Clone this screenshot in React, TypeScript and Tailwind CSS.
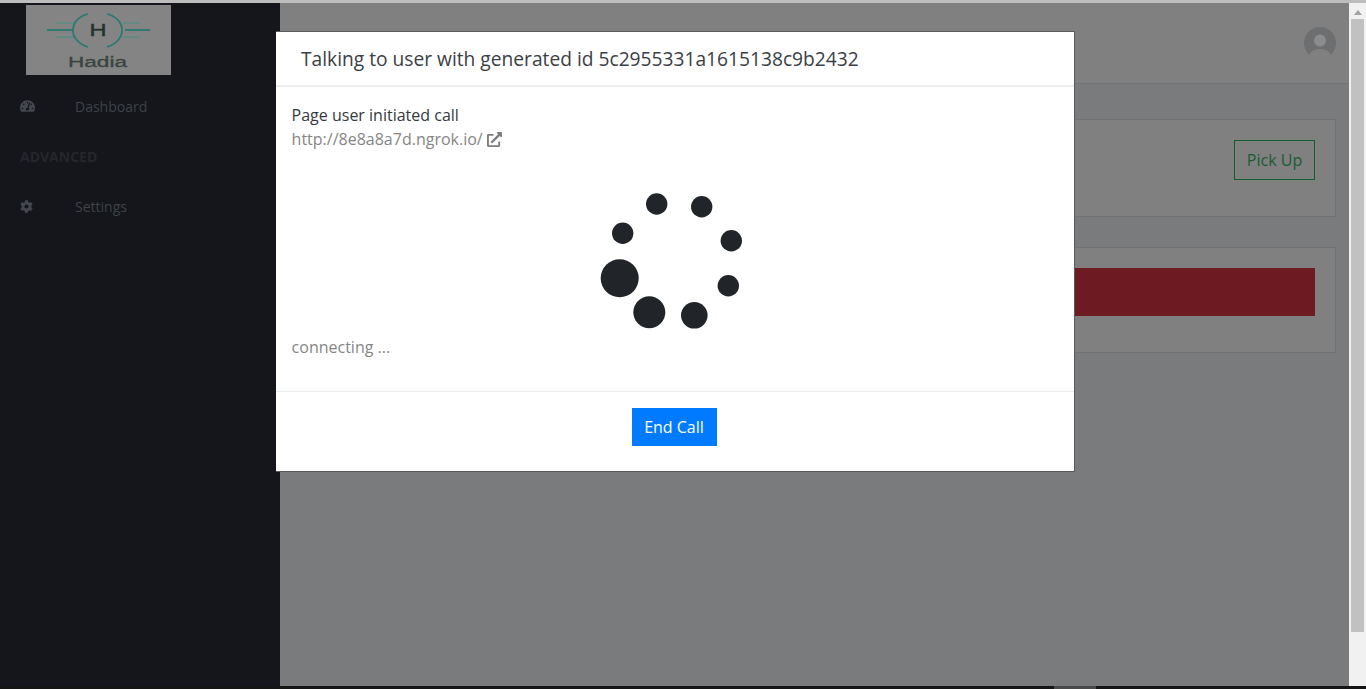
import { FaCog, FaExternalLinkAlt, FaTachometerAlt } from "react-icons/fa";

const SPINNER_DOTS = [
  { cx: 76.7, cy: 24, r: 10.7 },
  { cx: 121.7, cy: 26.7, r: 10.7 },
  { cx: 151.3, cy: 60.7, r: 10.7 },
  { cx: 148.3, cy: 105.7, r: 10.7 },
  { cx: 114.3, cy: 135.3, r: 13.3 },
  { cx: 69.3, cy: 132.3, r: 16 },
  { cx: 39.7, cy: 98.3, r: 19 },
  { cx: 42.7, cy: 53.3, r: 10.7 },
];

function Logo() {
  return (
    <div className="ml-[26px] mt-[2px] h-[70px] w-[145px] bg-[#848484]">
      <svg width="145" height="70" viewBox="0 0 145 70">
        <g fill="none" stroke="#2a7a70" strokeWidth="1.8">
          <path d="M21 25 H47" />
          <path d="M30 18 H48 M30 32 H48" stroke="#5a8a83" strokeWidth="1.4" />
          <path d="M99 25 H124" />
          <path d="M97 18 H114 M97 32 H114" stroke="#5a8a83" strokeWidth="1.4" />
          <path d="M62 9 C42 14 42 36 62 42" />
          <path d="M81 9 C101 14 101 36 81 42" />
        </g>
        <text x="63.5" y="31" textLength="17" lengthAdjust="spacingAndGlyphs" fontFamily="Liberation Sans, sans-serif" fontSize="17" fill="#263230" stroke="#263230" strokeWidth="0.4">
          H
        </text>
        <text x="42" y="62" textLength="59" lengthAdjust="spacingAndGlyphs" fontFamily="Liberation Sans, sans-serif" fontSize="14" fill="#3a4443" stroke="#3a4443" strokeWidth="0.3">
          Hadia
        </text>
      </svg>
    </div>
  );
}

function Sidebar() {
  return (
    <aside className="w-[280px] shrink-0 bg-[#14161b]">
      <Logo />
      <nav className="mt-[19px] text-[14px] text-[#3f4247]">
        <div className="flex h-[24px] items-center pl-[20px]">
          <FaTachometerAlt className="w-[15px] text-[14px] text-[#44474d]" />
          <span className="ml-[40px]">Dashboard</span>
        </div>
        <div className="mt-[29px] h-[20px] pl-[20px] text-[14px] leading-[20px] font-bold text-[#24262b]">ADVANCED</div>
        <div className="mt-[27px] flex h-[24px] items-center pl-[20px]">
          <FaCog className="w-[13px] text-[13px] text-[#44474d]" />
          <span className="ml-[42px]">Settings</span>
        </div>
      </nav>
    </aside>
  );
}

function Avatar() {
  return (
    <svg width="32" height="32" viewBox="0 0 32 32">
      <circle cx="16" cy="16" r="16" fill="#6c6e70" />
      <circle cx="16" cy="13.5" r="6" fill="#8b8c8c" />
      <path d="M3 32 C6 24 10 22 16 22 C22 22 26 24 29 32 Z" fill="#808080" />
    </svg>
  );
}

function Main() {
  return (
    <main className="flex min-w-0 flex-1 flex-col bg-[#7a7b7c]">
      <header className="flex h-[81px] shrink-0 items-center justify-end border-b border-[#727374] bg-[#808080] pr-[13px] pb-[1px]">
        <Avatar />
      </header>
      <div className="flex flex-col gap-[30px] pt-[35px] pr-[13px] pl-[20px]">
        <section className="flex h-[98px] items-start justify-end border border-[#727272] bg-[#808080] p-[20px]">
          <button className="h-[40px] w-[81px] border border-[#14602c] text-[16px] text-[#1a5c31]">Pick Up</button>
        </section>
        <section className="h-[106px] border border-[#727272] bg-[#808080] p-[20px]">
          <div className="h-[48px] bg-[#6e1a22]" />
        </section>
      </div>
    </main>
  );
}

function Scrollbar() {
  return (
    <div className="flex w-[17px] shrink-0 flex-col items-center bg-[#f1f1f1]">
      <div className="mt-[7px] h-0 w-0 border-x-[4px] border-b-[5px] border-x-transparent border-b-[#a3a3a3]" />
      <div className="mt-[4px] h-[613px] w-[13px] bg-[#c1c1c1]" />
    </div>
  );
}

function CallModal() {
  return (
    <div className="absolute top-[31px] left-[276px] flex h-[441px] w-[799px] flex-col border-t border-r border-b border-[#5a5a5a] bg-white text-[16px] text-[#343a40]">
      <div className="h-[55px] shrink-0 border-b-2 border-[#ececec] pt-[12px] pl-[25px] text-[19.2px] leading-[29px] text-[#3b4046]">
        Talking to user with generated id 5c2955331a1615138c9b2432
      </div>
      <div className="flex-1 pt-[16px] pr-[16px] pl-[15.6px] text-[#343a40]">
        <p className="leading-[24px]">Page user initiated call</p>
        <a className="flex items-center gap-[4px] leading-[24px] text-[#868686]">
          http://8e8a8a7d.ngrok.io/
          <FaExternalLinkAlt className="text-[15px] text-[#7d7d7d]" />
        </a>
        <svg className="mx-auto mt-[29px]" width="200" height="150" viewBox="0 0 200 150">
          {SPINNER_DOTS.map((dot) => (
            <circle key={dot.cx} cx={dot.cx + 5} cy={dot.cy} r={dot.r} fill="#212529" />
          ))}
        </svg>
        <p className="mt-[5px] leading-[24px] text-[#868686]">connecting ...</p>
      </div>
      <div className="flex h-[80px] shrink-0 justify-center border-t border-[#e9ecef] pt-[16px] pr-[2px]">
        <button className="h-[38px] w-[85px] bg-[#007bff] text-[16px] text-white">End Call</button>
      </div>
    </div>
  );
}

export default function App() {
  return (
    <div className="relative flex h-[689px] w-[1366px] flex-col overflow-hidden bg-black font-['Open_Sans',sans-serif]">
      <div className="h-[3px] shrink-0 bg-[#bdbdbd]" />
      <div className="flex min-h-0 flex-1">
        <Sidebar />
        <Main />
        <Scrollbar />
      </div>
      <div className="flex h-[3px] shrink-0 bg-[#151515] pl-[1054px]">
        <div className="h-full w-[42px] bg-[#4a4a4a]" />
      </div>
      <CallModal />
    </div>
  );
}
